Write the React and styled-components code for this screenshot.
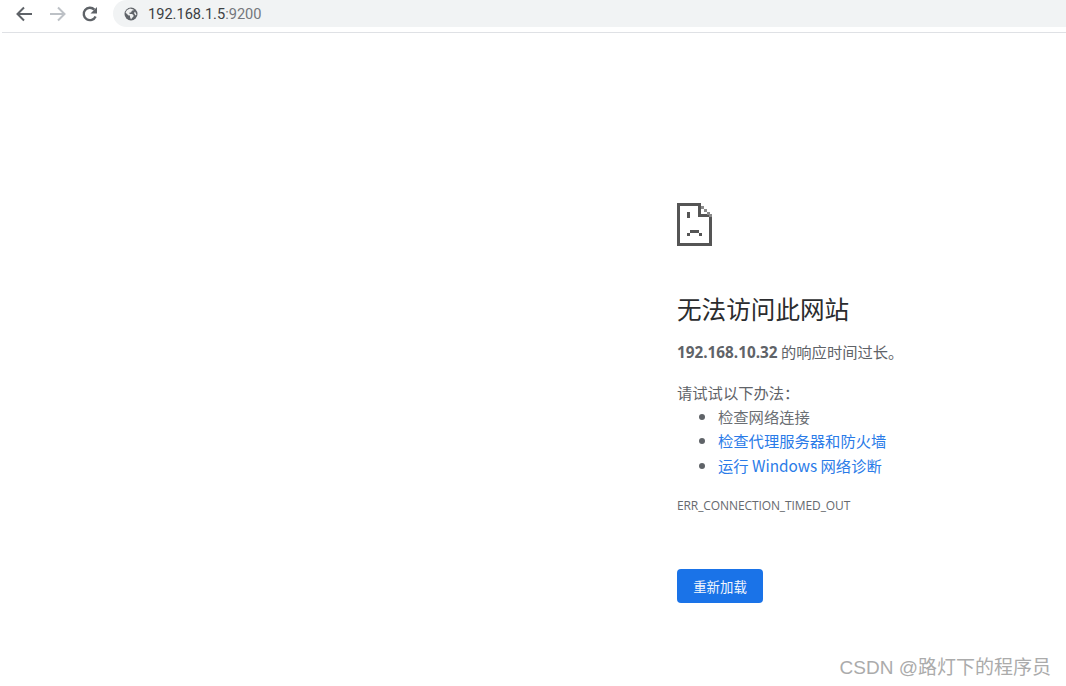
import React from "react";
import styled, { createGlobalStyle } from "styled-components";

const Global = createGlobalStyle`
  html, body { margin: 0; padding: 0; background: #fff; }
  body { font-family: "Open Sans", "Noto Sans CJK SC", sans-serif; }
`;
const Page = styled.div`
  position: relative;
  width: 1066px;
  height: 686px;
  overflow: hidden;
  background: #fff;
`;
const Toolbar = styled.header`
  display: flex;
  align-items: flex-start;
  height: 32px;
  margin-left: 2px;
  border-bottom: 1px solid #dfe1e5;
`;
const NavIcons = styled.div`
  display: flex;
  align-items: center;
  gap: 13px;
  width: 111px;
  height: 27px;
  padding-left: 12px;
  box-sizing: border-box;
`;
const Omnibox = styled.div`
  flex: 1;
  display: flex;
  align-items: center;
  height: 27px;
  padding-left: 11px;
  border-radius: 14px 0 0 14px;
  background: #f1f3f4;
  font: 14.6px "Roboto", sans-serif;
  color: #3c4043;
`;
const Port = styled.span`
  color: #74777c;
`;
const Url = styled.span`
  margin-left: 10px;
`;
const Main = styled.main`
  padding: 170px 0 0 677px;
  width: 300px;
  font-size: 15.3px;
  color: #5f6368;
`;
const Heading = styled.h1`
  margin: 40px 0 0;
  font: 400 24.6px/36px "Noto Sans CJK SC", sans-serif;
  color: #2b2c2e;
  white-space: nowrap;
`;
const Summary = styled.p`
  margin: 14px 0 0;
  line-height: 22px;
  white-space: nowrap;
  font-family: "Noto Sans CJK SC", sans-serif;
`;
const Host = styled.b`
  font-family: "Open Sans", sans-serif;
  font-weight: 700;
`;
const Hint = styled.p`
  margin: 18px 0 0;
  line-height: 22px;
  font-family: "Noto Sans CJK SC", sans-serif;
`;
const Suggestions = styled.ul`
  margin: 1px 0 0;
  padding: 0 0 0 41px;
  list-style: disc;
  line-height: 24.3px;
  white-space: nowrap;
  font-family: "Noto Sans CJK SC", "Open Sans", sans-serif;
`;
const Suggestion = styled.li`
  color: ${p => (p.$link ? "#2a7be8" : "#6a6e73")};
  &::marker { color: #5f6368; }
`;
const Code = styled.div`
  margin-top: 20px;
  font: 12px/18px "Open Sans", sans-serif;
  letter-spacing: -0.1px;
  color: #66696e;
  white-space: nowrap;
`;
const Reload = styled.button`
  display: block;
  margin-top: 54px;
  width: 86px;
  height: 34px;
  padding: 0;
  border: 0;
  border-radius: 4px;
  background: #1a73e8;
  color: #f2f6fd;
  font: 400 13.4px "Noto Sans CJK SC", sans-serif;
`;
const Watermark = styled.div`
  position: absolute;
  right: 15px;
  top: 656px;
  font: 19px/24px "Liberation Sans", "Noto Sans CJK SC", sans-serif;
  color: #ababab;
  white-space: nowrap;
`;

const Back = () => (
  <svg width="20" height="20" viewBox="0 0 20 20" fill="none" stroke="#5f6368" strokeWidth="2">
    <path d="M18 10H3.500M10 3.500 3.500 10l6.500 6.500" />
  </svg>
);
const Forward = () => (
  <svg width="20" height="20" viewBox="0 0 20 20" fill="none" stroke="#bdc1c6" strokeWidth="2">
    <path d="M3 10h14.500M11 3.500l6.500 6.500-6.500 6.500" />
  </svg>
);
const Refresh = () => (
  <svg width="20" height="20" viewBox="0 0 20 20" fill="none">
    <path d="M15.600 12.500A6.200 6.200 0 1 1 14.400 5.600" stroke="#5f6368" strokeWidth="2.400" />
    <path d="M17 3v6.500h-6.500z" fill="#5f6368" />
  </svg>
);
const Globe = () => (
  <svg width="14" height="14" viewBox="0 0 14 14">
    <circle cx="7" cy="7" r="6.500" fill="#5f6368" />
    <path d="M6 1.500 3 3 1.500 5.500 4.500 8.500H6v1.500L7 12.500l1-1.500 1.500-1.500V8L8 7H5.500V5.500H7l1-2h1.500V2.500Z M11 4.500l-1 1.500 1.500 2.500 1-1Z" fill="#fff" opacity=".9" />
  </svg>
);
const SadPage = () => (
  <svg width="35" height="43" viewBox="0 0 35 43" shapeRendering="crispEdges" fill="#555">
    <path d="M0 0h24v3H3v37h29V14h3v29H0Z" />
    <path d="M21 3h3v8h8v3H21Z" />
    <path d="M24 3h3v3h-3zM27 6h3v3h-3zM30 9h3v3h-3zM32 11h3v3h-3z" fill="#8a8a8a" />
    <path d="M10 9h3v6h-3zM10 30h3v3h-3zM13 27h9v3h-9zM22 30h3v3h-3z" />
  </svg>
);

export default function App() {
  return (
    <Page>
      <Global />
      <Toolbar>
        <NavIcons>
          <Back />
          <Forward />
          <Refresh />
        </NavIcons>
        <Omnibox>
          <Globe />
          <Url>192.168.1.5<Port>:9200</Port></Url>
        </Omnibox>
      </Toolbar>
      <Main>
        <SadPage />
        <Heading>无法访问此网站</Heading>
        <Summary><Host>192.168.10.32</Host> 的响应时间过长。</Summary>
        <Hint>请试试以下办法：</Hint>
        <Suggestions>
          <Suggestion>检查网络连接</Suggestion>
          <Suggestion $link>检查代理服务器和防火墙</Suggestion>
          <Suggestion $link>运行 Windows 网络诊断</Suggestion>
        </Suggestions>
        <Code>ERR_CONNECTION_TIMED_OUT</Code>
        <Reload>重新加载</Reload>
      </Main>
      <Watermark>CSDN @路灯下的程序员</Watermark>
    </Page>
  );
}
